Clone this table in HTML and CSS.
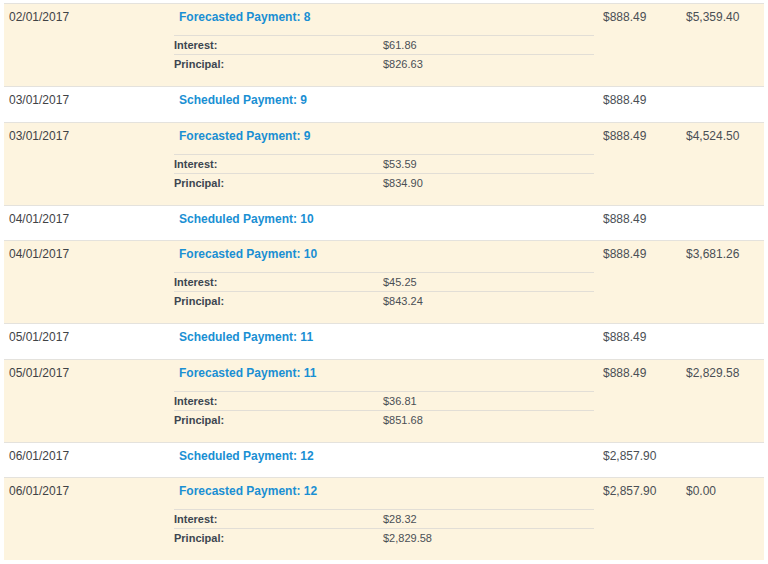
FILE: index.html
```html
<!DOCTYPE html>
<html>
<head>
<meta charset="utf-8">
<link rel="stylesheet" href="styles.css">
</head>
<body>
<div class="table">
  <div class="row forecast">
    <div class="c-date">02/01/2017</div>
    <div class="c-desc">
      <div class="title">Forecasted Payment: 8</div>
      <div class="sub"><span class="lbl">Interest:</span><span class="val">$61.86</span></div>
      <div class="sub"><span class="lbl">Principal:</span><span class="val">$826.63</span></div>
    </div>
    <div class="c-amt">$888.49</div>
    <div class="c-bal">$5,359.40</div>
  </div>
  <div class="row scheduled">
    <div class="c-date">03/01/2017</div>
    <div class="c-desc"><div class="title">Scheduled Payment: 9</div></div>
    <div class="c-amt">$888.49</div>
    <div class="c-bal"></div>
  </div>
  <div class="row forecast">
    <div class="c-date">03/01/2017</div>
    <div class="c-desc">
      <div class="title">Forecasted Payment: 9</div>
      <div class="sub"><span class="lbl">Interest:</span><span class="val">$53.59</span></div>
      <div class="sub"><span class="lbl">Principal:</span><span class="val">$834.90</span></div>
    </div>
    <div class="c-amt">$888.49</div>
    <div class="c-bal">$4,524.50</div>
  </div>
  <div class="row scheduled">
    <div class="c-date">04/01/2017</div>
    <div class="c-desc"><div class="title">Scheduled Payment: 10</div></div>
    <div class="c-amt">$888.49</div>
    <div class="c-bal"></div>
  </div>
  <div class="row forecast">
    <div class="c-date">04/01/2017</div>
    <div class="c-desc">
      <div class="title">Forecasted Payment: 10</div>
      <div class="sub"><span class="lbl">Interest:</span><span class="val">$45.25</span></div>
      <div class="sub"><span class="lbl">Principal:</span><span class="val">$843.24</span></div>
    </div>
    <div class="c-amt">$888.49</div>
    <div class="c-bal">$3,681.26</div>
  </div>
  <div class="row scheduled">
    <div class="c-date">05/01/2017</div>
    <div class="c-desc"><div class="title">Scheduled Payment: 11</div></div>
    <div class="c-amt">$888.49</div>
    <div class="c-bal"></div>
  </div>
  <div class="row forecast">
    <div class="c-date">05/01/2017</div>
    <div class="c-desc">
      <div class="title">Forecasted Payment: 11</div>
      <div class="sub"><span class="lbl">Interest:</span><span class="val">$36.81</span></div>
      <div class="sub"><span class="lbl">Principal:</span><span class="val">$851.68</span></div>
    </div>
    <div class="c-amt">$888.49</div>
    <div class="c-bal">$2,829.58</div>
  </div>
  <div class="row scheduled">
    <div class="c-date">06/01/2017</div>
    <div class="c-desc"><div class="title">Scheduled Payment: 12</div></div>
    <div class="c-amt">$2,857.90</div>
    <div class="c-bal"></div>
  </div>
  <div class="row forecast last">
    <div class="c-date">06/01/2017</div>
    <div class="c-desc">
      <div class="title">Forecasted Payment: 12</div>
      <div class="sub"><span class="lbl">Interest:</span><span class="val">$28.32</span></div>
      <div class="sub"><span class="lbl">Principal:</span><span class="val">$2,829.58</span></div>
    </div>
    <div class="c-amt">$2,857.90</div>
    <div class="c-bal">$0.00</div>
  </div>
</div>
</body>
</html>
```
FILE: styles.css
```css
html, body {
  margin: 0;
  padding: 0;
  background: #ffffff;
}
body {
  padding: 3px 4px 0 4px;
  font-family: "Liberation Sans", Arial, sans-serif;
  font-size: 12px;
  color: #45494e;
}
.table {
  border-top: 1px solid #e4e2dd;
  width: 760px;
}
.row {
  display: grid;
  grid-template-columns: 170px 420px 83px 87px;
  border-bottom: 1px solid #e4e2dd;
  line-height: 16px;
}
.row.last {
  border-bottom: none;
}
.forecast {
  background: #fdf4df;
  padding-bottom: 13px;
}
.scheduled {
  background: #ffffff;
  padding-bottom: 13.5px;
}
.c-date {
  padding: 5px 0 0 5px;
  color: #3f4246;
}
.c-desc {
  padding-top: 5px;
}
.title {
  padding-left: 5px;
  font-weight: bold;
  color: #1a8fd3;
}
.forecast .title {
  margin-bottom: 10px;
}
.sub {
  display: grid;
  grid-template-columns: 209px 1fr;
  border-top: 1px solid #e2ded6;
  font-size: 11px;
  line-height: 18px;
}
.lbl {
  font-weight: bold;
  color: #3c4650;
}
.val {
  color: #4a4f55;
}
.c-amt {
  padding: 5px 0 0 9px;
  color: #4a4f55;
}
.c-bal {
  padding: 5px 0 0 9px;
  color: #4a4f55;
}
```
